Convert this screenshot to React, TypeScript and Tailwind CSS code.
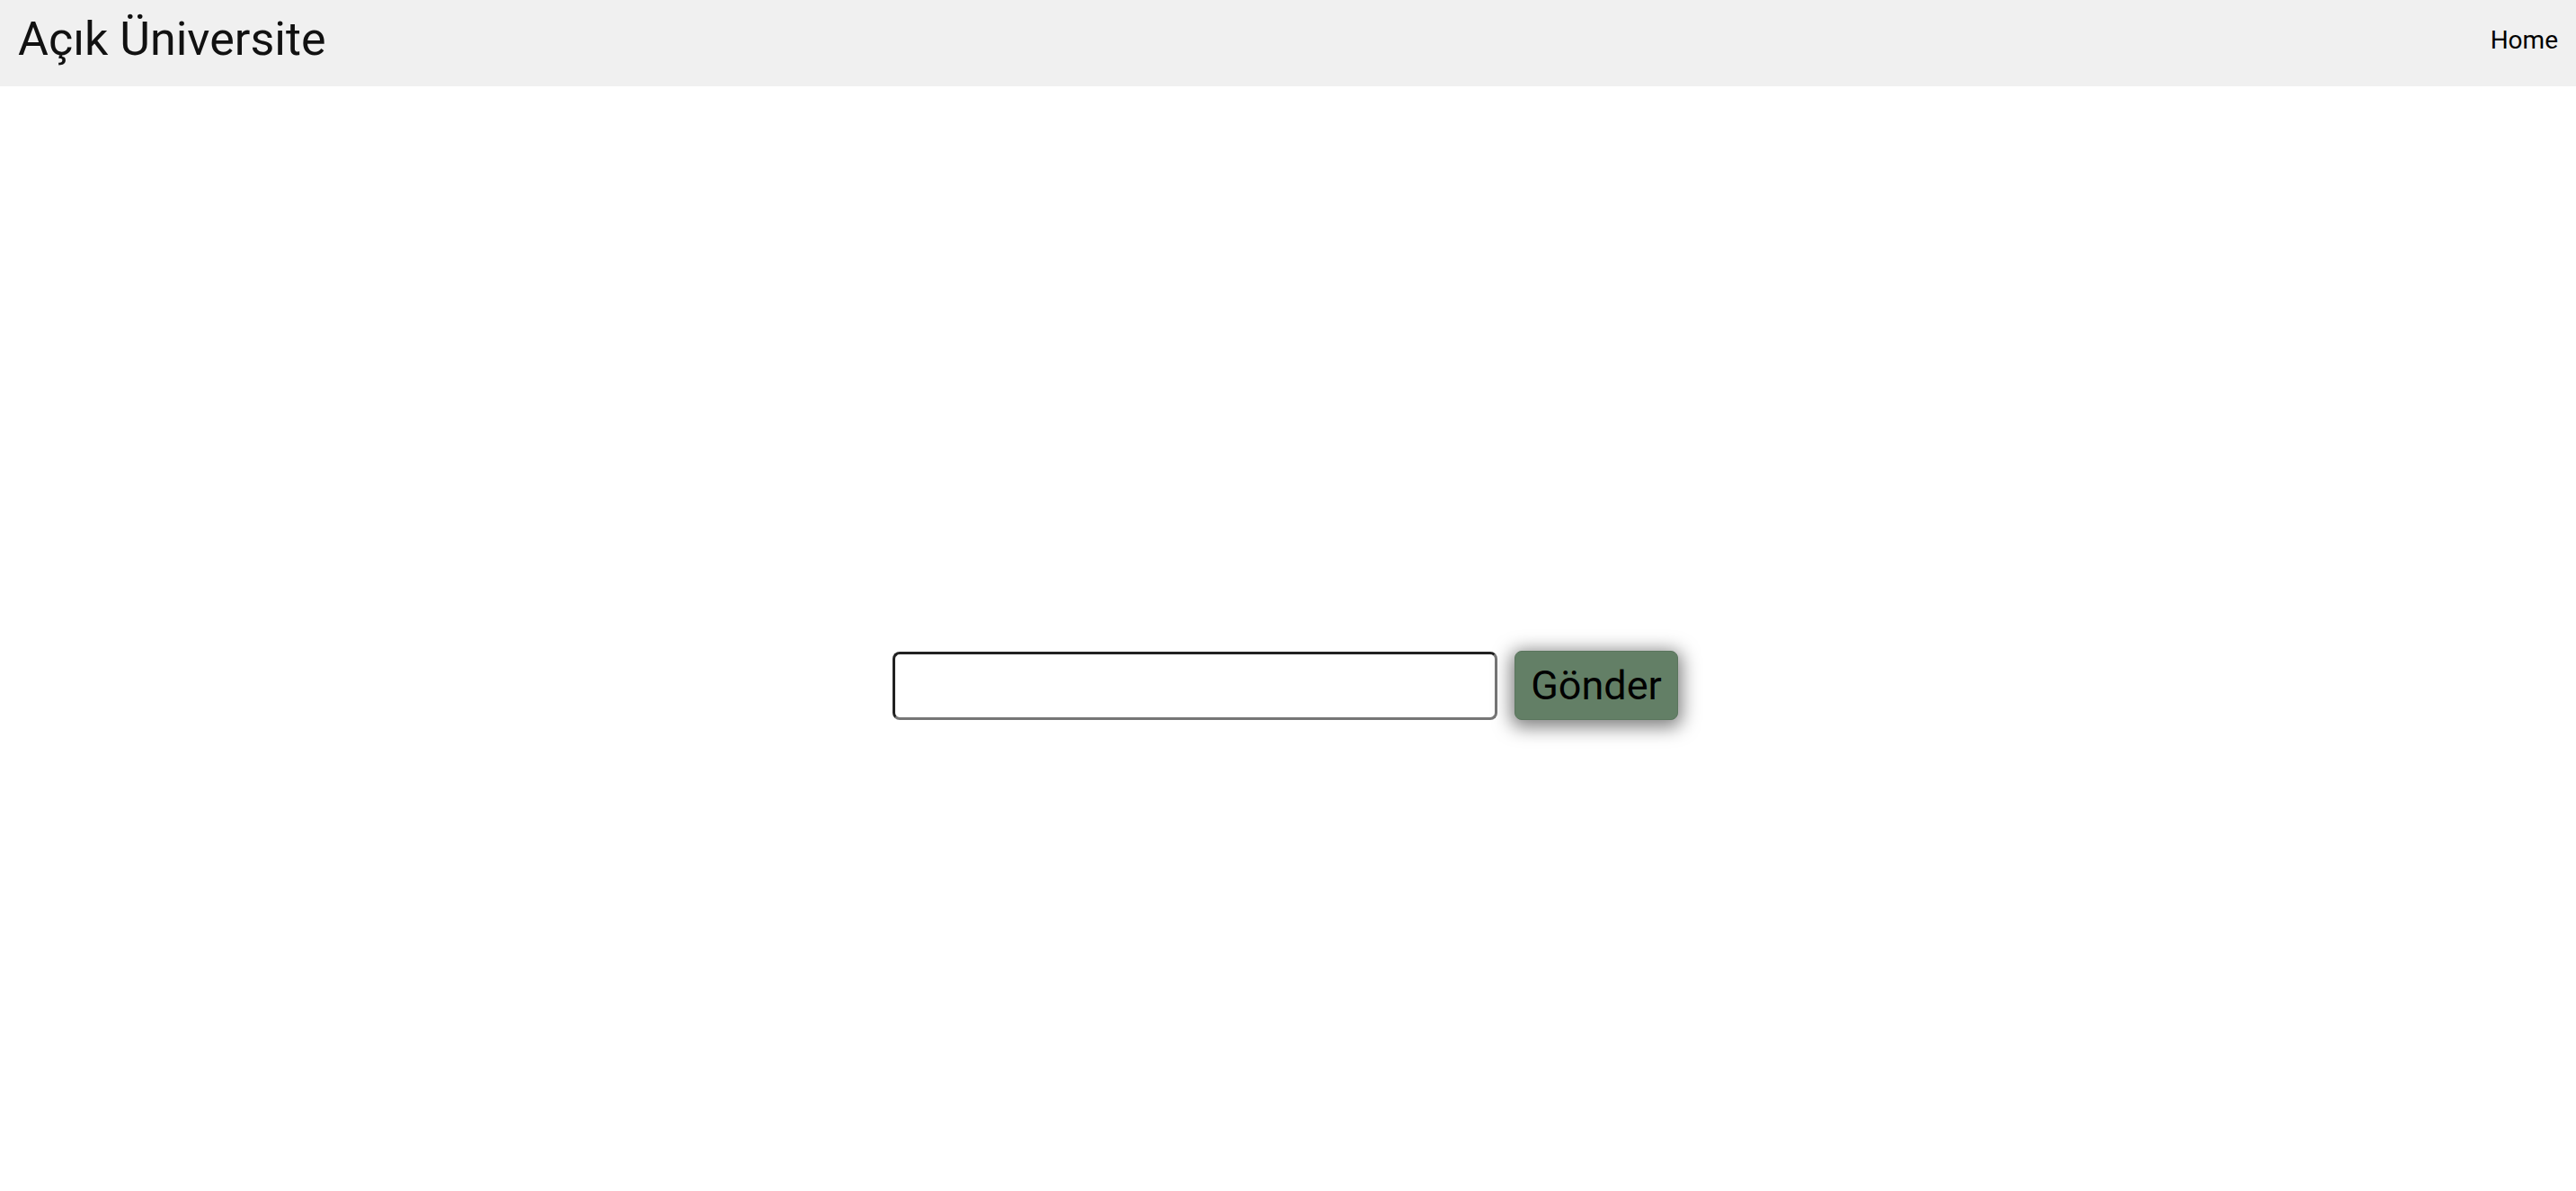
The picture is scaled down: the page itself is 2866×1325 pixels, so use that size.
export default function App() {
  return (
    <div className="min-h-screen bg-white font-['Roboto',sans-serif] text-[#111]">
      {/* ── Header ── */}
      <header className="flex h-[96px] items-center justify-between bg-[#f0f0f0] pl-[20px] pr-[20px]">
        <h1 className="mt-[-8px] text-[52px] font-normal leading-none">Açık Üniversite</h1>
        <a href="#" className="mt-[-6px] text-[28px] leading-none text-black">
          Home
        </a>
      </header>

      {/* ── Form ── */}
      <main className="flex justify-center pt-[628px] pr-[6px]">
        <form className="flex items-center gap-[19px]" onSubmit={(e) => e.preventDefault()}>
          <input
            type="text"
            className="h-[76px] w-[673px] rounded-[8px] border-[3px] border-t-[#222] border-l-[#222] border-r-[#767676] border-b-[#767676] bg-white px-2 text-[40px] outline-none"
          />
          <button
            type="submit"
            className="h-[77px] w-[182px] rounded-[8px] border border-[#5a755d] bg-[#637f66] text-[45px] leading-none text-black shadow-[0_4px_20px_4px_rgba(0,0,0,0.5)]"
          >
            Gönder
          </button>
        </form>
      </main>
    </div>
  );
}
